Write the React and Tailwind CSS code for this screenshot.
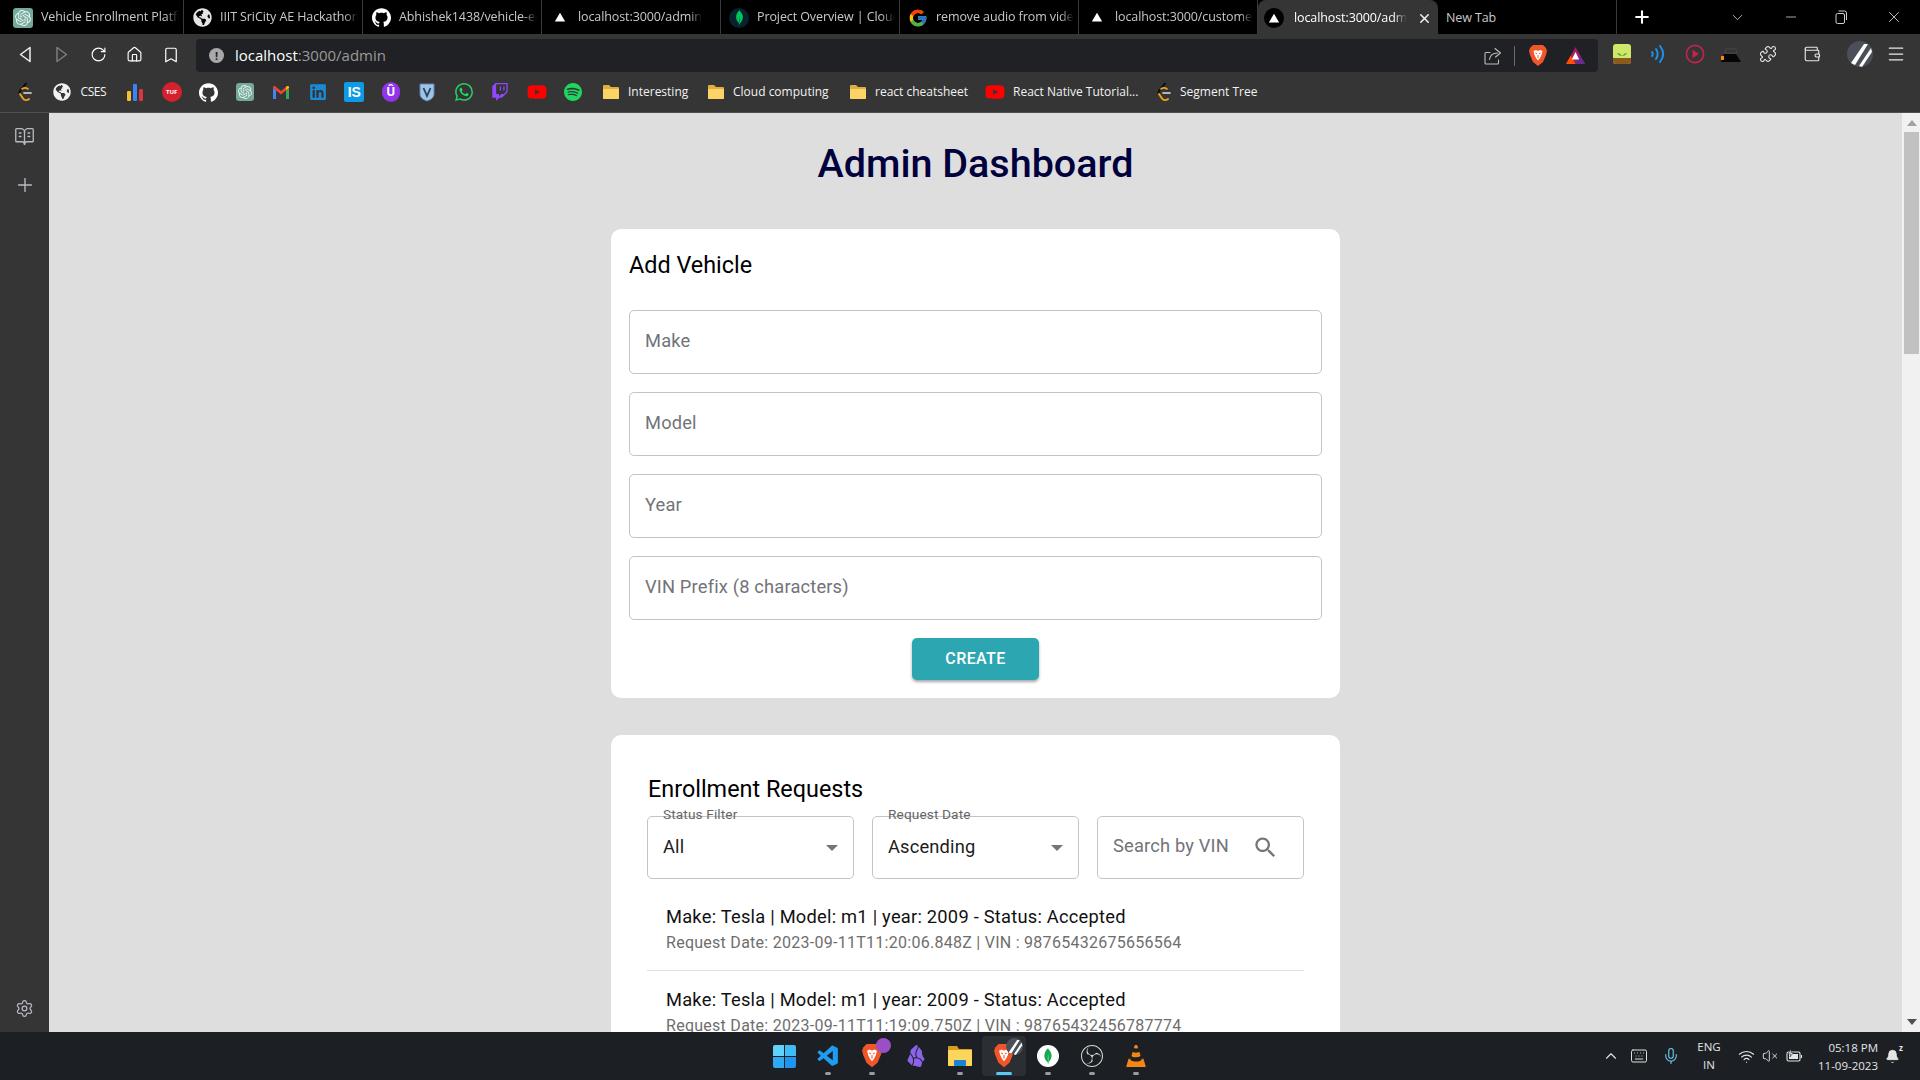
import {
  Home,
  Bookmark,
  RotateCw,
  Puzzle,
  Wallet,
  Settings,
  BookOpenText,
  Plus,
  ChevronUp,
  ChevronDown,
  Keyboard,
  Mic,
  Wifi,
  VolumeX,
  Minus,
  X,
  Menu,
  Bell,
} from "lucide-react";
import {
  SiGithub,
  SiOpenai,
  SiWhatsapp,
  SiTwitch,
  SiSpotify,
  SiMongodb,
  SiObsidian,
  SiObsstudio,
  SiVlcmediaplayer,
} from "react-icons/si";
import { FaGlobeAmericas, FaLinkedin, FaYoutube } from "react-icons/fa";
import { FcGoogle } from "react-icons/fc";
import { VscVscode } from "react-icons/vsc";

const chromeFont = "font-['Open_Sans','Noto_Sans',sans-serif]";

function Triangle({ size = 14 }) {
  return (
    <svg width={size} height={size * 0.86} viewBox="0 0 14 12">
      <path d="M7 1 L13 11 L1 11 Z" fill="white" />
    </svg>
  );
}

function VercelRound() {
  return (
    <span className="flex h-5 w-5 items-center justify-center rounded-full bg-black">
      <Triangle size={12} />
    </span>
  );
}

function Gpt({ size = 20 }) {
  return (
    <span
      className="flex items-center justify-center rounded-[3px] bg-[#74aa9c]"
      style={{ width: size, height: size }}
    >
      <SiOpenai size={size - 4} color="#e8f2ef" />
    </span>
  );
}

function MongoLeaf() {
  return (
    <span className="flex h-5 w-5 items-center justify-center rounded-full bg-[#06232e]">
      <SiMongodb size={15} color="#00c65e" />
    </span>
  );
}

function Folder() {
  return (
    <svg width="18" height="16" viewBox="0 0 18 16" className="shrink-0">
      <path d="M1 2 a1 1 0 0 1 1-1 h5 l2 2 h7 a1 1 0 0 1 1 1 v10 a1 1 0 0 1-1 1 H2 a1 1 0 0 1-1-1 Z" fill="#e2ad3f" />
      <path d="M1 5 h16 v9 a1 1 0 0 1-1 1 H2 a1 1 0 0 1-1-1 Z" fill="#fbd465" />
    </svg>
  );
}

function YtRed() {
  return <FaYoutube size={20} color="#ff0000" className="shrink-0" />;
}

function Leet() {
  return (
    <svg width="16" height="20" viewBox="0 0 16 20" fill="none" className="shrink-0">
      <path d="M9 1.5 L3 9 C2.3 10 2.3 11 3 12" stroke="#0a0a0a" strokeWidth="2" strokeLinecap="round" />
      <path d="M3 12 L6 16.5 C7.5 18.5 10 18.5 12 17" stroke="#f0a020" strokeWidth="2" strokeLinecap="round" />
      <path d="M5 7 C7 5.5 9 5.5 11 7" stroke="#f0a020" strokeWidth="1.6" strokeLinecap="round" />
      <path d="M7 11 H14" stroke="#b5b5b5" strokeWidth="1.8" strokeLinecap="round" />
    </svg>
  );
}

function Gmail() {
  return (
    <svg width="18" height="15" viewBox="0 0 18 15">
      <path d="M1 14 V3 L4 5 V14 Z" fill="#4285f4" />
      <path d="M14 14 V5 L17 3 V14 Z" fill="#34a853" />
      <path d="M1 3 V1.5 L3 1 L9 6 L15 1 L17 1.5 V3 L9 9.5 Z" fill="#ea4335" />
      <path d="M14 5 L17 3 V1.5 L15 1 L14 2 Z" fill="#fbbc04" />
    </svg>
  );
}

function Bars() {
  return (
    <svg width="18" height="18" viewBox="0 0 18 18">
      <rect x="1" y="8" width="4" height="10" rx="1" fill="#f2c037" />
      <rect x="7" y="1" width="4" height="17" rx="1" fill="#3b82f6" />
      <rect x="13" y="6" width="4" height="12" rx="1" fill="#d9363e" />
    </svg>
  );
}

function Tuf() {
  return (
    <span className="flex h-5 w-5 items-center justify-center rounded-full bg-[#d4212f] text-[6px] font-bold text-white">
      TUF
    </span>
  );
}

function BadgeIs() {
  return (
    <span className="flex h-5 w-5 items-center justify-center rounded-[2px] bg-[#0d9ae6] font-['Liberation_Sans',sans-serif] text-[14px] font-bold text-white">
      IS
    </span>
  );
}

function Udemyish() {
  return (
    <span className="flex h-5 w-[18px] items-center justify-center rounded-full bg-[#9333ea] text-[12px] font-bold leading-none text-white">
      Û
    </span>
  );
}

function Vault() {
  return (
    <svg width="16" height="19" viewBox="0 0 16 19">
      <path d="M1 1 H15 V11 C15 15 11 17 8 18 C5 17 1 15 1 11 Z" fill="#9dc3e6" stroke="#5f87ad" />
      <path d="M4.5 5 L8 13 L11.5 5" fill="none" stroke="#29415c" strokeWidth="1.8" />
    </svg>
  );
}

function Brave({ size = 20 }) {
  return (
    <svg width={size} height={size * 1.15} viewBox="0 0 20 23">
      <path d="M5 1 H15 L18 4 L19 7 L18 11 L15 18 L10 22 L5 18 L2 11 L1 7 L2 4 Z" fill="#f1562b" />
      <path d="M5.5 7 L8 6 L10 7 L12 6 L14.5 7 L13.5 11 L12 14 L10 16.5 L8 14 L6.5 11 Z" fill="#fff" />
      <path d="M7.5 9 L9 10 M12.5 9 L11 10 M10 11 V14" stroke="#f1562b" strokeWidth="1" />
    </svg>
  );
}

function Bat() {
  return (
    <svg width="21" height="19" viewBox="0 0 21 19">
      <path d="M10.5 1 L20 18 H1 Z" fill="#9e1f63" />
      <path d="M5.8 9.5 L10.5 18 H1 Z" fill="#ff5000" />
      <path d="M15.2 9.5 L20 18 H10.5 Z" fill="#662d91" />
      <path d="M10.5 6 L14.2 13.5 H6.8 Z" fill="#fff" />
    </svg>
  );
}

function Forest() {
  return (
    <svg width="18" height="20" viewBox="0 0 18 20">
      <rect width="18" height="20" rx="3" fill="#cfe86a" />
      <path d="M0 14 H18 V17 a3 3 0 0 1-3 3 H3 a3 3 0 0 1-3-3 Z" fill="#8a5a1f" />
      <path d="M9 12 C7 9 5 9 4 9 C5 11 7 12 9 12 C11 12 13 11 14 9 C12 9 11 10 9 12" fill="#4f9a3c" />
    </svg>
  );
}

function Waves() {
  return (
    <svg width="16" height="18" viewBox="0 0 16 18" fill="none" stroke="#1e90e8" strokeWidth="2" strokeLinecap="round">
      <path d="M2 7 C3 8 3 10 2 11" />
      <path d="M6 4 C8 7 8 11 6 14" />
      <path d="M10 1 C14 6 14 12 10 17" />
    </svg>
  );
}

function RedPlay() {
  return (
    <svg width="20" height="20" viewBox="0 0 20 20">
      <circle cx="10" cy="10" r="8.6" fill="none" stroke="#c3244e" strokeWidth="1.6" />
      <path d="M7.5 5.8 L14 10 L7.5 14.2 Z" fill="#c3244e" />
    </svg>
  );
}

function DarkExt() {
  return (
    <svg width="20" height="20" viewBox="0 0 20 20">
      <path d="M5 5 H15 L16 9 H4 Z" fill="#333" stroke="#555" strokeWidth="0.6" />
      <path d="M3 10 H15 L20 18 H0 Z" fill="#050505" />
      <path d="M0 12 H3 V16 H0 Z" fill="#f08a12" />
    </svg>
  );
}

function Avatar({ size = 26 }) {
  return (
    <span
      className="flex items-center justify-center overflow-hidden rounded-full bg-[#4a4f5a]"
      style={{ width: size, height: size }}
    >
      <svg width={size} height={size} viewBox="0 0 26 26">
        <path d="M4 22 L17 3 H21 L8 24 Z" fill="#fff" />
        <path d="M12 25 L24 7 L25 11 L15 26 Z" fill="#fff" />
      </svg>
    </span>
  );
}

function NavTriangle({ right, color }) {
  return (
    <svg width="13" height="17" viewBox="0 0 13 17" fill="none" stroke={color} strokeWidth="1.5" strokeLinejoin="round">
      <path d={right ? "M2 1.5 L11.5 8.5 L2 15.5 Z" : "M11 1.5 L1.5 8.5 L11 15.5 Z"} />
    </svg>
  );
}

function ShareBox() {
  return (
    <svg width="18" height="18" viewBox="0 0 18 18" fill="none" stroke="#bdbdbd" strokeWidth="1.1" strokeLinecap="round" strokeLinejoin="round">
      <path d="M6 5.5 H2 a1 1 0 0 0-1 1 V16 a1 1 0 0 0 1 1 H13.5 a1 1 0 0 0 1-1 V13" />
      <path d="M5.5 12.5 C6 8 9 6 13.5 6" />
      <path d="M11 1.5 L16.5 6 L11.5 10" />
    </svg>
  );
}

function RestoreIcon() {
  return (
    <svg width="12" height="14" viewBox="0 0 12 14" fill="none" stroke="#cfcfcf" strokeWidth="1">
      <rect x="1" y="3.5" width="8.5" height="10" rx="1.5" />
      <path d="M3.5 1 H9.5 a2 2 0 0 1 2 2 V10" />
    </svg>
  );
}

function BatteryBolt() {
  return (
    <svg width="17" height="14" viewBox="0 0 17 14" fill="none" stroke="#e4e4e4" strokeWidth="1.1">
      <rect x="1" y="3" width="13" height="9" rx="1.5" />
      <path d="M15.5 6 V9" />
      <rect x="3" y="5" width="9" height="5" fill="#e4e4e4" stroke="none" />
      <path d="M5 0 L2 5 H5 L4 8 L7.5 3.5 H5 Z" fill="#e4e4e4" stroke="#1c2025" strokeWidth="0.5" />
    </svg>
  );
}

function WinLogo() {
  return (
    <span className="grid h-[23px] w-[23px] grid-cols-2 gap-[1px]">
      <span className="rounded-tl-[2px] bg-[#63d2fb]" />
      <span className="rounded-tr-[2px] bg-[#3fbef6]" />
      <span className="rounded-bl-[2px] bg-[#2fa9f2]" />
      <span className="rounded-br-[2px] bg-[#1c96ee]" />
    </span>
  );
}

function Files() {
  return (
    <svg width="24" height="22" viewBox="0 0 24 22">
      <path d="M0 2 a1 1 0 0 1 1-1 h8 l2 3 h12 a1 1 0 0 1 1 1 v15 a1 1 0 0 1-1 1 H1 a1 1 0 0 1-1-1 Z" fill="#d99d1f" />
      <path d="M0 5 H24 V20 a1 1 0 0 1-1 1 H1 a1 1 0 0 1-1-1 Z" fill="#fbd65a" />
      <rect x="6" y="15" width="12" height="6" rx="1" fill="#1686d4" />
    </svg>
  );
}

function BraveProfile({ badge }) {
  return (
    <span className="relative">
      <Brave size={22} />
      <span className="absolute -right-[8px] -top-[5px]">{badge}</span>
    </span>
  );
}

const tabs = [
  { title: "Vehicle Enrollment Platform", icon: <Gpt /> },
  { title: "IIIT SriCity AE Hackathon", icon: <FaGlobeAmericas size={19} color="#e5e5e5" /> },
  { title: "Abhishek1438/vehicle-enrollment", icon: <SiGithub size={19} color="#fff" /> },
  { title: "localhost:3000/admin", icon: <Triangle size={12} /> },
  { title: "Project Overview | Cloud: MongoDB", icon: <MongoLeaf /> },
  { title: "remove audio from video", icon: <FcGoogle size={20} /> },
  { title: "localhost:3000/customer", icon: <Triangle size={12} /> },
];

const bookmarks = [
  { icon: <Leet /> },
  { icon: <FaGlobeAmericas size={18} color="#f2f2f2" />, label: "CSES", wide: true },
  { icon: <Bars /> },
  { icon: <Tuf /> },
  { icon: <SiGithub size={19} color="#fff" /> },
  { icon: <Gpt size={18} /> },
  { icon: <Gmail /> },
  { icon: <FaLinkedin size={18} color="#1a8ad6" /> },
  { icon: <BadgeIs /> },
  { icon: <Udemyish /> },
  { icon: <Vault /> },
  { icon: <SiWhatsapp size={18} color="#25d366" /> },
  { icon: <SiTwitch size={18} color="#9146ff" /> },
  { icon: <YtRed /> },
  { icon: <SiSpotify size={18} color="#1ed760" /> },
];

const namedBookmarks = [
  { icon: <Folder />, label: "Interesting", width: "w-[106.5px]" },
  { icon: <Folder />, label: "Cloud computing", width: "w-[142px]" },
  { icon: <Folder />, label: "react cheatsheet", width: "w-[136px]" },
  { icon: <YtRed />, label: "React Native Tutorial...", width: "w-[171px]" },
  { icon: <Leet />, label: "Segment Tree", width: "w-[110px]" },
];

const taskbarApps = [
  { icon: <WinLogo /> },
  { icon: <VscVscode size={25} color="#1f9cf0" />, dot: true },
  {
    icon: (
      <BraveProfile
        badge={<span className="block h-[15px] w-[15px] rounded-full bg-[#9a4fc4]" />}
      />
    ),
    dot: true,
  },
  { icon: <SiObsidian size={22} color="#8a63e8" /> },
  { icon: <Files />, dot: true },
  { icon: <BraveProfile badge={<Avatar size={17} />} />, active: true },
  {
    icon: (
      <span className="flex h-[22px] w-[22px] items-center justify-center rounded-full bg-white">
        <SiMongodb size={16} color="#13aa52" />
      </span>
    ),
    dot: true,
  },
  { icon: <SiObsstudio size={22} color="#d8d8d8" />, dot: true },
  { icon: <SiVlcmediaplayer size={22} color="#f58613" />, dot: true },
];

function TabBar() {
  return (
    <div className={`flex h-[34px] items-end bg-black pl-[5px] text-[12.5px] tracking-[-0.1px] ${chromeFont}`}>
      {tabs.map((tab) => (
        <div key={tab.title} className="flex h-[34px] w-[179px] items-center gap-2 border-r border-[#3a3a3a] pb-px pl-[8px] pr-1 pt-[2px] text-[#c8c8c8]">
          <span className="flex w-5 shrink-0 justify-center">{tab.icon}</span>
          <span className="overflow-hidden whitespace-nowrap [mask-image:linear-gradient(to_right,black_90%,transparent)]">
            {tab.title}
          </span>
        </div>
      ))}
      <div className="flex h-[34px] w-[180px] items-center gap-[10px] rounded-t-lg bg-[#353535] pl-[6px] pr-[6px] pt-[2px] text-white">
        <span className="flex w-5 shrink-0 justify-center"><VercelRound /></span>
        <span className="flex-1 overflow-hidden whitespace-nowrap [mask-image:linear-gradient(to_right,black_88%,transparent)]">
          localhost:3000/admin
        </span>
        <X size={15} strokeWidth={2.5} color="#eee" />
      </div>
      <div className="flex h-[34px] w-[179px] items-center border-r border-[#3a3a3a] pl-[8px] pt-[2px] text-[#c8c8c8]">New Tab</div>
      <div className="flex h-[34px] w-[50px] items-center justify-center"><Plus size={20} strokeWidth={2.5} color="#fff" /></div>
      <div className="ml-[62px] flex h-[34px] items-center text-[#cfcfcf]">
        <ChevronDown size={17} strokeWidth={1.2} />
        <Minus size={16} strokeWidth={1.2} className="ml-[37px]" />
        <span className="ml-[36px]"><RestoreIcon /></span>
        <X size={18} strokeWidth={1.2} className="ml-[38px]" />
      </div>
    </div>
  );
}

function AddressBar() {
  return (
    <div className="flex h-[38px] items-end bg-[#353535]">
      <div className="flex h-[38px] w-[196px] items-center pl-[7px] pt-[3px] text-white">
        <span className="flex w-[36.5px] justify-center"><NavTriangle color="#f0f0f0" /></span>
        <span className="flex w-[36.5px] justify-center"><NavTriangle right color="#7d7d7d" /></span>
        <span className="flex w-[36.5px] justify-center"><RotateCw size={17} strokeWidth={1.6} /></span>
        <span className="flex w-[36.5px] justify-center"><Home size={17} strokeWidth={1.6} /></span>
        <span className="flex w-[36.5px] justify-center"><Bookmark size={18} strokeWidth={1.6} /></span>
      </div>
      <div className="flex h-[33px] w-[1402px] items-center rounded-[4px] bg-[#202124] pl-[13px] pr-[12px]">
        <span className="flex h-[15px] w-[15px] items-center justify-center rounded-full bg-[#a8a8a8] text-[11px] font-bold leading-none text-[#202124]">!</span>
        <span className={`ml-[11px] flex-1 text-[15px] text-[#9a9a9a] ${chromeFont}`}>
          <span className="text-white">localhost</span>:3000/admin
        </span>
        <span className="mr-[-1px]"><ShareBox /></span>
        <span className="ml-[13px] h-[20px] w-px bg-[#6a6a6a]" />
        <span className="ml-[13px]"><Brave size={20} /></span>
        <span className="ml-[17px]"><Bat /></span>
      </div>
      <div className="flex h-[38px] items-center pt-[2px] text-[#e8e8e8]">
        <span className="ml-[6px] flex w-9 justify-center"><Forest /></span>
        <span className="flex w-9 justify-center"><Waves /></span>
        <span className="ml-px flex w-9 justify-center"><RedPlay /></span>
        <span className="flex w-9 justify-center"><DarkExt /></span>
        <span className="ml-px flex w-9 justify-center"><Puzzle size={18} strokeWidth={1.5} /></span>
        <span className="ml-2 flex w-9 justify-center"><Wallet size={18} strokeWidth={1.5} /></span>
        <span className="ml-3 flex w-9 justify-center"><Avatar /></span>
        <span className="flex w-9 justify-center"><Menu size={20} strokeWidth={1.5} /></span>
      </div>
    </div>
  );
}

function BookmarksBar() {
  return (
    <div className={`flex h-[41px] items-center border-b border-[#505050] bg-[#353535] pl-[7px] text-[12px] text-[#f2f2f2] ${chromeFont}`}>
      {bookmarks.map((b, i) =>
        b.wide ? (
          <div key={i} className="flex w-[73.5px] items-center pl-[9px]">
            {b.icon}
            <span className="ml-[10px] tracking-[-0.4px]">{b.label}</span>
          </div>
        ) : (
          <span key={i} className="flex w-[36.5px] justify-center">{b.icon}</span>
        )
      )}
      {namedBookmarks.map((b, i) => (
        <div key={b.label} className={`flex ${b.width} shrink-0 items-center gap-[8px] ${i === 0 ? "pl-[10.5px]" : "pl-[9px]"}`}>
          {b.icon}
          <span className="whitespace-nowrap">{b.label}</span>
        </div>
      ))}
    </div>
  );
}

function Sidebar() {
  return (
    <aside className="flex w-[49px] shrink-0 flex-col items-center bg-[#353535] text-[#b9bbc2]">
      <BookOpenText size={21} strokeWidth={1.5} className="mt-[13px]" />
      <Plus size={22} strokeWidth={1.5} className="mt-[27px]" />
      <Settings size={19} strokeWidth={1.6} className="mb-[14px] mt-auto" />
    </aside>
  );
}

function TextField({ label }) {
  return (
    <div className="flex h-16 items-center rounded-[5px] border border-[#c4c4c4] pb-[2px] pl-[15px] text-[18.3px] tracking-[0.17px] text-[#73737a]">
      {label}
    </div>
  );
}

function SelectField({ label, value }) {
  return (
    <div className="relative flex h-[63px] w-[207px] items-center justify-between rounded-[5px] border border-[#c4c4c4] pl-[15px] pr-[15px] text-[18.3px] tracking-[0.17px] text-[#1c1c1c]">
      {/* label sits on the outline, like the unnotched mui label */}
      <span className="absolute left-[15px] top-[-13px] text-[13.7px] tracking-[0.1px] text-[#666]">{label}</span>
      <span className="pb-px">{value}</span>
      <span className="h-0 w-0 border-x-[6px] border-t-[6px] border-x-transparent border-t-[#757575]" />
    </div>
  );
}

function RequestRow({ date, vin, first }) {
  return (
    <div className={`px-[19px] ${first ? "border-b border-[#e0e0e0] pb-[15px] pt-[14px]" : "pt-[15px]"}`}>
      <p className="text-[18.3px] leading-[28px] tracking-[0.235px] text-[#111]">
        Make: Tesla | Model: m1 | year: 2009 - Status: Accepted
      </p>
      <p className="text-[16px] leading-[24px] tracking-[0.27px] text-[#6e6e6e]">
        Request Date: {date} | VIN : {vin}
      </p>
    </div>
  );
}

function Dashboard() {
  return (
    <main className="min-w-0 flex-1 overflow-hidden bg-[#dedede] font-['Roboto',sans-serif]">
      <h1 className="pt-[27px] text-center text-[39.5px] font-medium leading-[48px] text-[#00003c]">Admin Dashboard</h1>

      <section className="mx-auto mt-[41px] w-[729px] rounded-[10px] bg-white px-[18px] py-[18px]">
        <h2 className="text-[23.4px] leading-[36px] text-black">Add Vehicle</h2>
        <div className="mt-[27px] flex flex-col gap-[18px]">
          <TextField label="Make" />
          <TextField label="Model" />
          <TextField label="Year" />
          <TextField label="VIN Prefix (8 characters)" />
        </div>
        <div className="mt-[18px] flex justify-center">
          <button className="h-[42px] w-[127px] rounded-[5px] bg-[#2ca7b1] text-[16px] font-medium tracking-[0.4px] text-white shadow-[0_2px_3px_rgba(0,0,0,0.35)]">
            CREATE
          </button>
        </div>
      </section>

      <section className="mx-auto mt-[37px] w-[729px] rounded-[10px] bg-white px-[36px] pb-[20px] pt-[36px]">
        <h2 className="pl-px text-[23.4px] leading-[36px] text-black">Enrollment Requests</h2>
        <div className="mt-[9px] flex justify-between">
          <SelectField label="Status Filter" value="All" />
          <SelectField label="Request Date" value="Ascending" />
          <div className="flex h-[63px] w-[207px] items-center justify-between rounded-[5px] border border-[#c4c4c4] pl-[15px] pr-[24px] text-[18.3px] tracking-[0.17px] text-[#73737a]">
            <span className="pb-[3px]">Search by VIN</span>
            <svg width="27" height="27" viewBox="0 0 24 24" fill="#757575">
              <path d="M15.5 14h-.79l-.28-.27C15.41 12.59 16 11.11 16 9.5 16 5.91 13.09 3 9.5 3S3 5.91 3 9.5 5.91 16 9.5 16c1.61 0 3.09-.59 4.23-1.57l.27.28v.79l5 4.99L20.49 19l-4.99-5zm-6 0C7.01 14 5 11.99 5 9.5S7.01 5 9.5 5 14 7.01 14 9.5 11.99 14 9.5 14z" />
            </svg>
          </div>
        </div>
        <div className="mt-[10px]">
          <RequestRow date="2023-09-11T11:20:06.848Z" vin="98765432675656564" first />
          <RequestRow date="2023-09-11T11:19:09.750Z" vin="98765432456787774" />
        </div>
      </section>
    </main>
  );
}

function Scrollbar() {
  return (
    <div className="flex w-[18px] shrink-0 flex-col items-center bg-[#f1f1f1] pl-px">
      <svg width="10" height="6" viewBox="0 0 10 6" className="mt-[7px]"><path d="M5 0 L10 6 H0 Z" fill="#a3a3a3" /></svg>
      <div className="mt-[6px] h-[222px] w-[15px] bg-[#c1c1c1]" />
      <svg width="10" height="6" viewBox="0 0 10 6" className="mb-[7px] mt-auto"><path d="M5 6 L10 0 H0 Z" fill="#505050" /></svg>
    </div>
  );
}

function Taskbar() {
  return (
    <footer className={`relative flex h-[48px] shrink-0 items-center justify-center bg-[#1c2025] ${chromeFont}`}>
      {taskbarApps.map((app, i) => (
        <div key={i} className={`relative flex h-[40px] w-[44px] items-center justify-center rounded-[4px] ${app.active ? "bg-[#2b2f34]" : ""}`}>
          {app.icon}
          {app.dot && <span className="absolute bottom-[1px] h-[3px] w-[6px] rounded-full bg-[#9b9b9b]" />}
          {app.active && <span className="absolute bottom-[1px] h-[3px] w-[16px] rounded-full bg-[#5cc8f8]" />}
        </div>
      ))}
      {/* tray is pinned to the right of the centred app strip */}
      <div className="absolute right-0 top-0 flex h-[48px] items-center text-[#e4e4e4]">
        <ChevronUp size={18} strokeWidth={1.5} />
        <Keyboard size={18} strokeWidth={1.3} className="ml-[10px]" />
        <Mic size={18} strokeWidth={1.5} color="#6cc8e8" className="ml-[14px]" />
        <span className="ml-[13px] flex w-[32px] flex-col items-center text-[11.5px] leading-[18px]">
          <span>ENG</span>
          <span>IN</span>
        </span>
        <Wifi size={17} strokeWidth={1.6} className="ml-[13px]" />
        <VolumeX size={16} strokeWidth={1.4} className="ml-[7px]" />
        <span className="ml-[8px]"><BatteryBolt /></span>
        <span className="ml-[15px] flex flex-col items-end pt-px text-[11.5px] leading-[18px]">
          <span>05:18 PM</span>
          <span>11-09-2023</span>
        </span>
        <span className="relative ml-[7px] mr-[20px]">
          <Bell size={15} fill="#e4e4e4" strokeWidth={1.3} />
          <span className="absolute -right-[3px] -top-[5px] text-[8px] font-bold leading-none">z</span>
        </span>
      </div>
    </footer>
  );
}

export default function App() {
  return (
    <div className="flex h-screen flex-col overflow-hidden bg-black">
      <TabBar />
      <AddressBar />
      <BookmarksBar />
      <div className="flex min-h-0 flex-1">
        <Sidebar />
        <Dashboard />
        <Scrollbar />
      </div>
      <Taskbar />
    </div>
  );
}
